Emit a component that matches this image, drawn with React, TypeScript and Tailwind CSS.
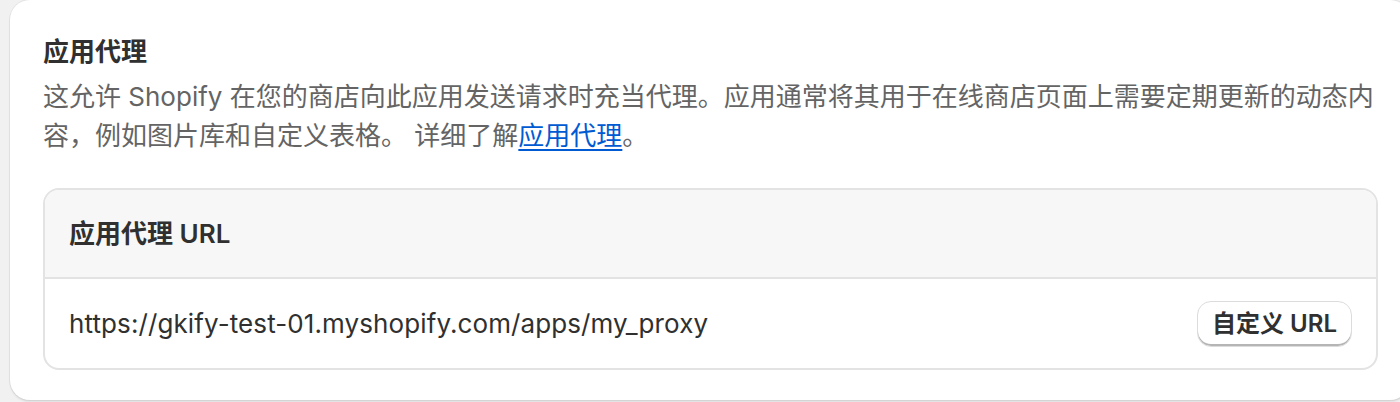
const font = { fontFamily: '"Inter", "Noto Sans CJK SC", sans-serif' };

const App = () => {
  return (
    <div className="w-[1400px] h-[402px] overflow-hidden bg-[#f1f1f1] pl-[10px]" style={font}>
      {/* Outer card */}
      <div className="w-[1400px] h-[400px] rounded-[20px] bg-white px-[33px] pt-[32px] shadow-[0_0_0_1px_rgba(0,0,0,0.05),0_2px_2px_rgba(0,0,0,0.08)]">
        <h2 className="text-[26px] leading-[40px] font-semibold text-[#303030]">应用代理</h2>
        <p className="mt-[5px] text-[26px] leading-[39px] text-[#646464]">
          这允许 Shopify 在您的商店向此应用发送请求时充当代理。应用通常将其用于在线商店页面上需要定期更新的动态内
          <br />
          容，例如图片库和自定义表格。 详细了解
          <a className="text-[#005bd3] underline underline-offset-[4px] decoration-[2px]" href="#">
            应用代理
          </a>
          。
        </p>

        {/* URL box */}
        <div className="mt-[33px] w-[1335px] rounded-[16px] border-2 border-[#e3e3e3] overflow-hidden">
          <div className="h-[89px] bg-[#f7f7f7] border-b-2 border-[#e3e3e3] flex items-center px-[24px]">
            <span className="text-[26px] font-semibold text-[#303030]">应用代理 URL</span>
          </div>
          <div className="h-[89px] flex items-center justify-between px-[24px]">
            <span className="text-[26px] text-[#303030] tracking-[0.1px]">https://gkify-test-01.myshopify.com/apps/my_proxy</span>
            <button className="w-[155px] h-[46px] rounded-[14px] border border-[#dcdcdc] bg-white text-[24px] font-semibold text-[#303030] shadow-[inset_0_-2px_0_#b5b5b5] flex items-center justify-center">
              自定义 URL
            </button>
          </div>
        </div>
      </div>
    </div>
  );
};

export default App;
